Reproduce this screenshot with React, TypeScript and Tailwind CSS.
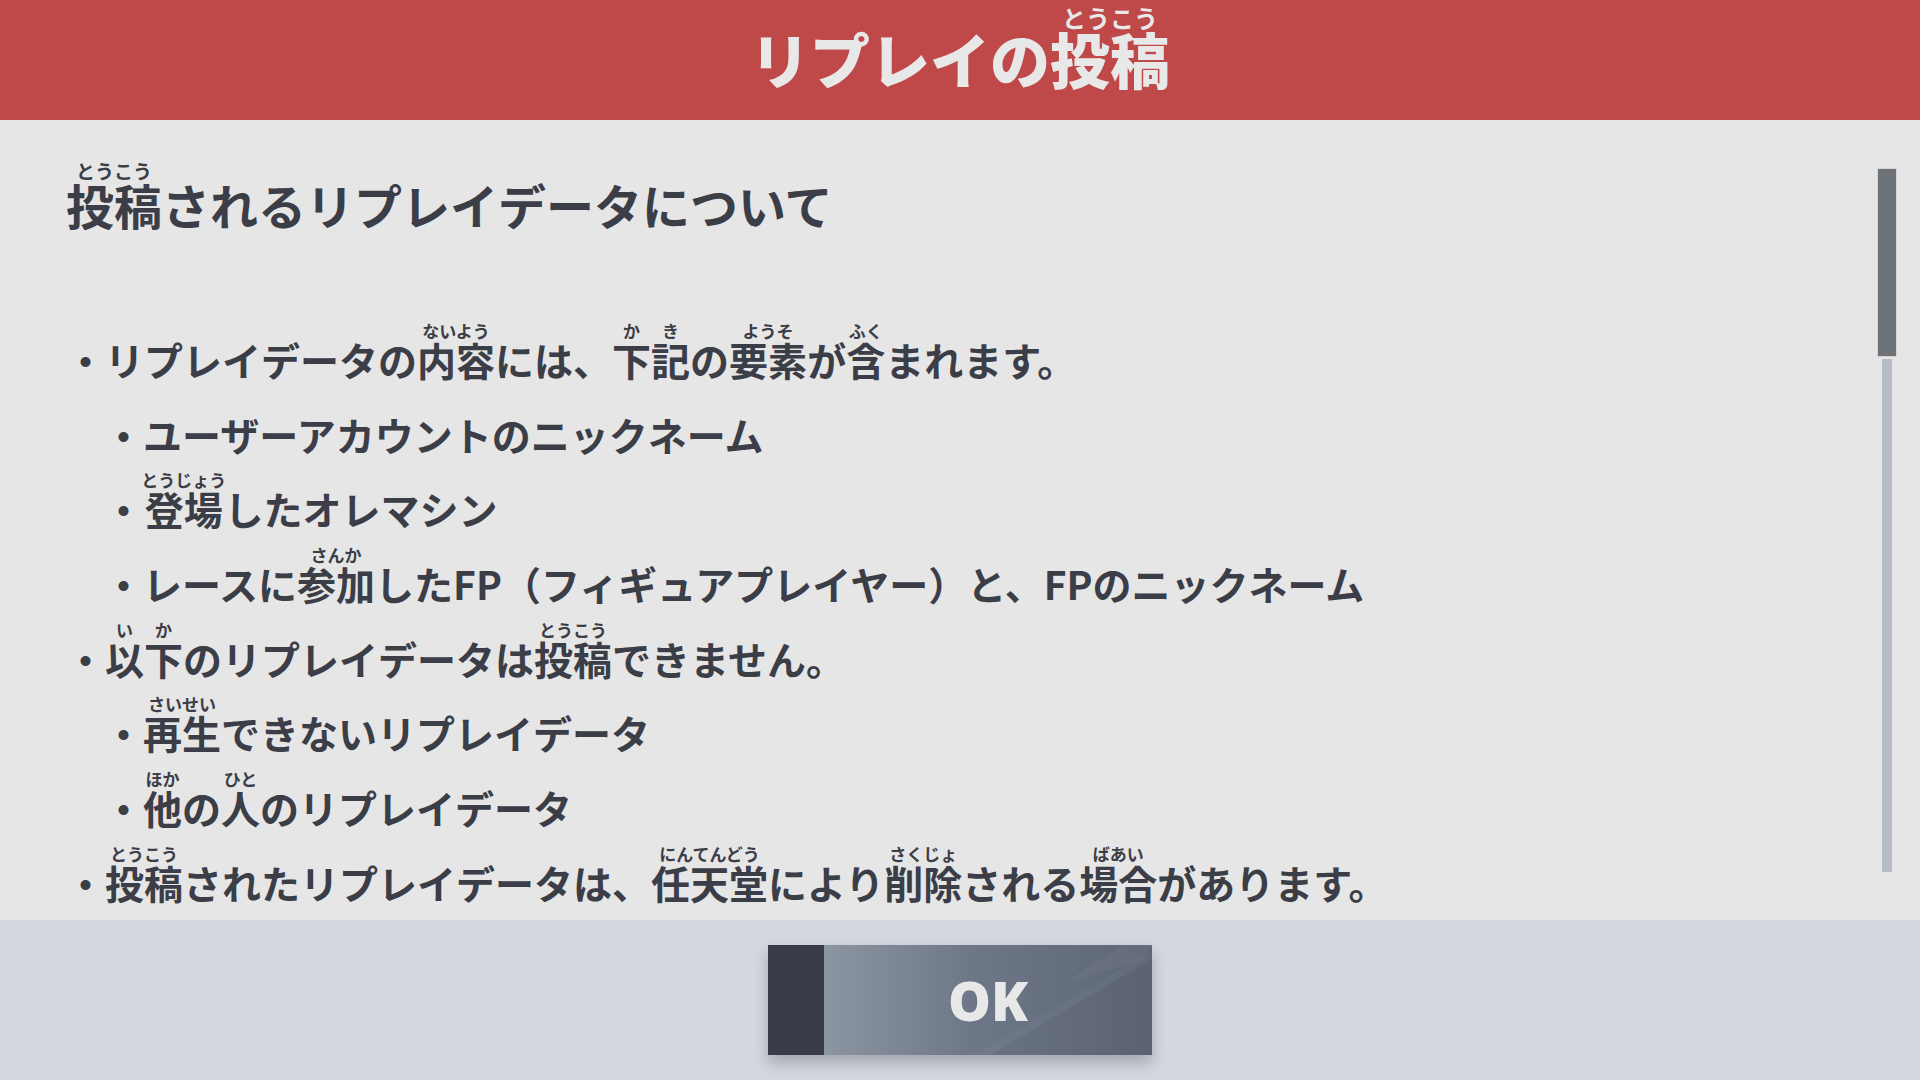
import React from 'react';

type Line = { sub?: boolean; content: React.ReactNode };

const R = ({ b, r, size = 'text-[17px]' }: { b: string; r: string; size?: string }) => (
  <ruby className="[ruby-align:center]">
    {b}
    <rt className={`${size} font-bold leading-none [ruby-align:center]`}>{r}</rt>
  </ruby>
);

const lines: Line[] = [
  {
    content: (
      <>
        リプレイデータの<R b="内容" r="ないよう" />には、<R b="下" r="か" />
        <R b="記" r="き" />の<R b="要素" r="ようそ" />が<R b="含" r="ふく" />まれます。
      </>
    ),
  },
  { sub: true, content: <>ユーザーアカウントのニックネーム</> },
  {
    sub: true,
    content: (
      <>
        <R b="登場" r="とうじょう" />したオレマシン
      </>
    ),
  },
  {
    sub: true,
    content: (
      <>
        レースに<R b="参加" r="さんか" />したFP（フィギュアプレイヤー）と、FPのニックネーム
      </>
    ),
  },
  {
    content: (
      <>
        <R b="以" r="い" />
        <R b="下" r="か" />のリプレイデータは<R b="投稿" r="とうこう" />できません。
      </>
    ),
  },
  {
    sub: true,
    content: (
      <>
        <R b="再生" r="さいせい" />できないリプレイデータ
      </>
    ),
  },
  {
    sub: true,
    content: (
      <>
        <R b="他" r="ほか" />の<R b="人" r="ひと" />のリプレイデータ
      </>
    ),
  },
  {
    content: (
      <>
        <R b="投稿" r="とうこう" />されたリプレイデータは、<R b="任天堂" r="にんてんどう" />により
        <R b="削除" r="さくじょ" />される<R b="場合" r="ばあい" />があります。
      </>
    ),
  },
];

export default function App() {
  return (
    <div className="w-[1920px] h-[1080px] flex flex-col overflow-hidden font-['Noto_Sans_CJK_JP','Noto_Sans',sans-serif] text-[#3b3d47]">
      {/* Header */}
      <header className="h-[120px] shrink-0 bg-[#bf4849] flex items-center justify-center">
        <h1 className="text-[60px] font-black leading-[60px] text-[#e8e8e8] mt-[-26px]">
          リプレイの<R b="投稿" r="とうこう" size="text-[24px]" />
        </h1>
      </header>

      {/* Body */}
      <main className="h-[800px] shrink-0 bg-[#e6e6e6] flex">
        <div className="flex-1 pl-[66px] pt-[42px]">
          <h2 className="h-[60px] leading-[60px] text-[48px] font-bold">
            <R b="投稿" r="とうこう" size="text-[19px]" />されるリプレイデータについて
          </h2>
          <div className="mt-[100px]">
            {lines.map((l, i) => (
              <div
                key={i}
                className={`h-[74.7px] leading-[74.7px] text-[39px] font-bold whitespace-nowrap ${l.sub ? 'pl-[38px]' : ''}`}
              >
                ・{l.content}
              </div>
            ))}
          </div>
        </div>

        {/* Scrollbar */}
        <div className="w-[20px] mr-[23px] mt-[48px] flex flex-col items-center">
          <div className="w-[20px] h-[189px] bg-[#6e7378] border border-[#d8d3d5]" />
          <div className="w-[10px] h-[513px] mt-[2px] bg-[#b7bcc4]" />
        </div>
      </main>

      {/* Footer */}
      <footer className="flex-1 bg-[#d3d7de] flex items-center justify-center">
        <button className="w-[384px] h-[110px] flex shadow-[0_8px_14px_rgba(0,0,0,0.22)]">
          <div className="w-[56px] h-full bg-[#3a3d49]" />
          <div className="relative flex-1 h-full overflow-hidden bg-gradient-to-r from-[#8c96a2] via-[#6e7787] via-45% to-[#5d6676] flex items-center justify-center">
            <svg className="absolute inset-0" width="328" height="110" viewBox="0 0 328 110">
              <polygon points="150,110 328,6 328,14 166,110" fill="#ffffff" fillOpacity="0.03" />
              <polygon points="240,38 318,16 328,0 300,0" fill="#ffffff" fillOpacity="0.04" />
              <polygon points="166,110 328,14 328,110" fill="#000000" fillOpacity="0.02" />
            </svg>
            <span className="relative text-[54px] font-black text-[#e8e8e8] font-['Noto_Sans','Liberation_Sans',sans-serif] leading-none">
              OK
            </span>
          </div>
        </button>
      </footer>
    </div>
  );
}
